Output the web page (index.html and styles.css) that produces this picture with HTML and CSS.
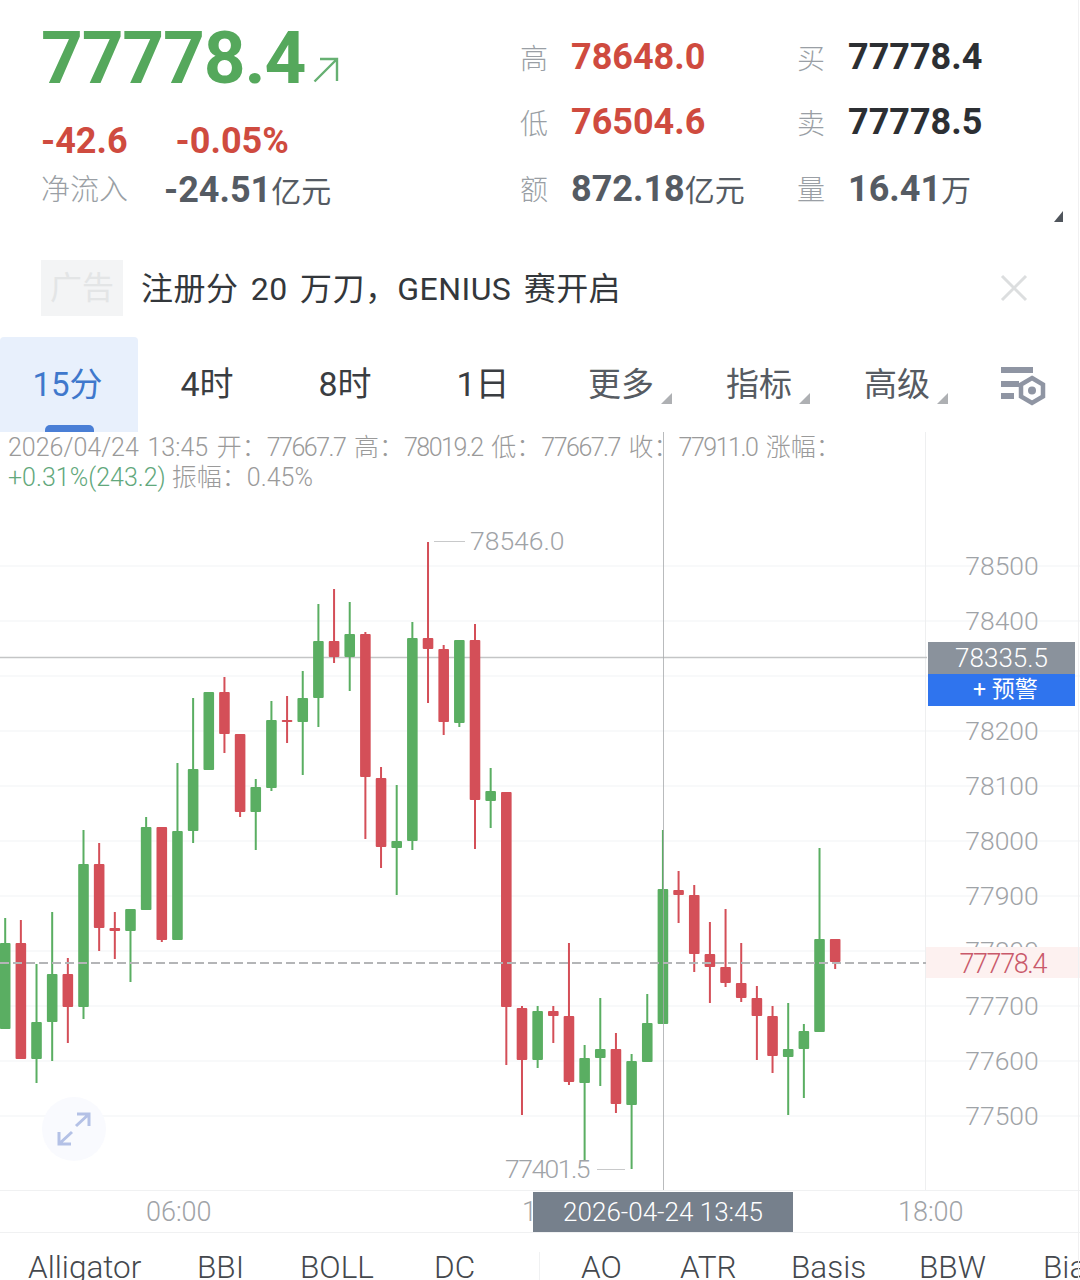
FILE: index.html
```html
<!DOCTYPE html>
<html>
  <head>
    <title>BTC 行情</title>
    <link rel="stylesheet" href="styles.css">
  </head>
  <body>
    <header class="quote">
      <div class="quote-left">
        <div class="last">
          77778.4
          <svg class="last-arrow" width="26" height="26" viewBox="0 0 26 26">
            <path d="M1.5 24.5 L24 2 M7 2 H24 V24" fill="none" stroke="#66b072" stroke-width="2.4" />
          </svg>
        </div>
        <div class="change"><span>-42.6</span><span>-0.05%</span></div>
        <div class="flow">
          <span class="lbl">净流入</span>
          <b>-24.51<small>亿元</small></b>
        </div>
      </div>
      <div class="stats">
        <span class="lbl">高</span><b class="red">78648.0</b>
        <span class="lbl">买</span><b class="dark">77778.4</b>
        <span class="lbl">低</span><b class="red">76504.6</b>
        <span class="lbl">卖</span><b class="dark">77778.5</b>
        <span class="lbl">额</span><b>872.18<small>亿元</small></b>
        <span class="lbl">量</span><b>16.41<small>万</small></b>
      </div>
      <i class="corner corner-dark"></i>
    </header>

    <div class="ad">
      <span class="ad-tag">广告</span>
      <span class="ad-text">注册分 20 万刀，GENIUS 赛开启</span>
      <svg class="ad-close" width="28" height="28" viewBox="0 0 28 28">
        <path d="M2 2 L26 26 M26 2 L2 26" stroke="#dcdedf" stroke-width="3" />
      </svg>
    </div>

    <nav class="tabs">
      <div class="tab active">15分</div>
      <div class="tab">4时</div>
      <div class="tab">8时</div>
      <div class="tab">1日</div>
      <div class="tab muted">更多<i class="corner"></i></div>
      <div class="tab muted">指标<i class="corner"></i></div>
      <div class="tab muted">高级<i class="corner"></i></div>
      <div class="tab tab-icon">
        <svg width="46" height="40" viewBox="0 0 46 40">
          <path d="M1 3 H33 M1 17 H19 M1 29 H14" stroke="#8f95a3" stroke-width="6" fill="none" />
          <path d="M32 11 L43 17.5 V29.5 L32 36 L21 29.5 V17.5 Z" stroke="#8f95a3" stroke-width="4.5" fill="#fff" />
          <circle cx="32" cy="23.5" r="4" fill="#8f95a3" />
        </svg>
      </div>
    </nav>

    <section class="chart">
      <svg id="kline" class="kline" width="1080" height="758" viewBox="0 432 1080 758"></svg>

      <div class="ohlc">
        <div class="ohlc-top">2026/04/24 13:45 开：<span class="n">77667.7</span> 高：<span class="n">78019.2</span> 低：<span class="n">77667.7</span> 收：<span class="n">77911.0</span> 涨幅：</div>
        <div><span class="up">+0.31%(243.2)</span> 振幅：0.45%</div>
      </div>

      <div class="price-tag">
        <div class="price-tag-val">78335.5</div>
        <div class="price-tag-btn">+ 预警</div>
      </div>
      <div class="last-tag">77778.4</div>

      <div class="expand">
        <svg width="36" height="36" viewBox="0 0 36 36">
          <path d="M20 15 L33 3 M21 3 H33 V15 M16 21 L3 33 M3 21 V33 H15" fill="none" stroke="#b4c1e6" stroke-width="3" />
        </svg>
      </div>
    </section>

    <div class="time-axis">
      <span class="time t-6">06:00</span>
      <span class="time t-12">1</span>
      <span class="time-tag">2026-04-24 13:45</span>
      <span class="time t-18">18:00</span>
    </div>

    <div class="indicators">
      <span class="w-all">Alligator</span>
      <span class="w-bbi">BBI</span>
      <span class="w-boll">BOLL</span>
      <span class="w-dc">DC</span>
      <span class="sep"></span>
      <span class="w-ao">AO</span>
      <span class="w-atr">ATR</span>
      <span class="w-basis">Basis</span>
      <span class="w-bbw">BBW</span>
      <span>Bias</span>
    </div>

    <script src="script.js"></script>
  </body>
</html>
```

FILE: styles.css
```css
html,
body {
  margin: 0;
  height: 1280px;
  overflow: hidden;
  background: #fff;
}

body {
  width: 1080px;
  font-family: "Roboto", "Noto Sans CJK SC", sans-serif;
  color: #33373b;
}

/* faint line down the right edge of the capture */
body::after {
  content: "";
  position: absolute;
  right: 1px;
  top: 0;
  width: 1px;
  height: 1280px;
  background: #f0f0f1;
}

b {
  font-weight: 700;
}

small {
  font-size: 30px;
  font-weight: 400;
}

.lbl {
  color: #9a9fa5;
  font-weight: 300;
}

.red {
  color: #cf4b3f;
}

.dark {
  color: #2c2f33;
}

/* top quote block */
.quote {
  position: relative;
  height: 260px;
  display: flex;
  box-sizing: border-box;
  padding: 14px 0 0 41px;
}

.quote-left {
  width: 479px;
}

.last {
  display: flex;
  align-items: flex-end;
  height: 88px;
  line-height: 88px;
  font-size: 73px;
  font-weight: 700;
  letter-spacing: -1.2px;
  color: #55a85c;
}

.last-arrow {
  margin: 0 0 19px 8px;
}

.change {
  display: flex;
  gap: 48px;
  margin-top: 19px;
  line-height: 40px;
  font-size: 36px;
  font-weight: 700;
  color: #cf4b3f;
}

.flow {
  display: flex;
  gap: 36px;
  margin-top: 9px;
  line-height: 40px;
  font-size: 29px;
  color: #555b63;
}

.flow b {
  font-size: 36px;
}

.stats {
  display: grid;
  grid-template-columns: 51px 226px 51px auto;
  grid-template-rows: 65px 65px 68px;
  align-items: center;
  margin-top: 10px;
  font-size: 36px;
  color: #555b63;
}

.stats .lbl {
  font-size: 28px;
}

.corner {
  position: absolute;
  width: 11px;
  height: 11px;
  background: #aeb0b3;
  clip-path: polygon(100% 0, 100% 100%, 0 100%);
}

.corner-dark {
  right: 17px;
  top: 211px;
  width: 9px;
  background: #50555c;
}

/* ad strip */
.ad {
  display: flex;
  align-items: center;
  height: 56px;
  padding-left: 41px;
}

.ad-tag {
  width: 82px;
  height: 56px;
  line-height: 56px;
  text-align: center;
  font-size: 32px;
  background: #f3f4f5;
  color: #e3e5e6;
}

.ad-text {
  margin-left: 18px;
  padding-bottom: 5px;
  font-size: 32px;
  letter-spacing: 0.45px;
  word-spacing: 4px;
}

.ad-close {
  margin-left: auto;
  margin-right: 52px;
}

/* period tabs */
.tabs {
  display: flex;
  height: 95px;
  margin-top: 21px;
  width: 1080px;
}

.tab {
  position: relative;
  width: 138px;
  line-height: 95px;
  text-align: center;
  font-size: 34px;
  color: #3a3d41;
}

.tab.muted {
  font-size: 33px;
  color: #565b62;
}

.tab.muted .corner {
  right: 18px;
  top: 56px;
}

.tab.active {
  box-sizing: border-box;
  padding-right: 3px;
  font-size: 33px;
  background: #e8f0fc;
  color: #3f78cc;
  border-radius: 4px 4px 0 0;
}

.tab.active::after {
  content: "";
  position: absolute;
  left: 45px;
  bottom: 0;
  width: 49px;
  height: 7px;
  border-radius: 5px 5px 0 0;
  background: #4a7fd6;
}

.tab-icon {
  flex: 1;
  line-height: 0;
  text-align: left;
  padding: 30px 0 0 34px;
}

/* chart canvas */
.chart {
  position: relative;
  height: 758px;
}

.kline {
  display: block;
}

.axis-label {
  font-size: 26.5px;
  font-weight: 300;
  fill: #9fa3a7;
}

.axis-label.tight {
  letter-spacing: -1.5px;
}

.ohlc {
  position: absolute;
  left: 8px;
  top: 1px;
  line-height: 30px;
  font-size: 25px;
  font-weight: 300;
  color: #9a9a9a;
  white-space: nowrap;
}

.ohlc-top {
  word-spacing: 2.5px;
}

.ohlc .n {
  letter-spacing: -1.5px;
}

.ohlc .up {
  color: #62a87c;
}

.price-tag {
  position: absolute;
  left: 928px;
  top: 210px;
  width: 147px;
  text-align: center;
}

.price-tag-val {
  height: 32px;
  line-height: 32px;
  font-size: 26px;
  font-weight: 300;
  background: #8a929c;
  color: #fff;
}

.price-tag-btn {
  box-sizing: border-box;
  height: 32px;
  padding-left: 8px;
  line-height: 32px;
  font-size: 23px;
  background: #2f74ee;
  color: #fff;
}

.last-tag {
  position: absolute;
  left: 926px;
  top: 515px;
  width: 154px;
  height: 31px;
  line-height: 35px;
  padding-right: 34px;
  box-sizing: border-box;
  text-align: right;
  font-size: 27px;
  font-weight: 300;
  letter-spacing: -1.4px;
  background: #fdf1f0;
  color: #c9596a;
}

.expand {
  position: absolute;
  left: 42px;
  top: 665px;
  width: 64px;
  height: 64px;
  display: flex;
  align-items: center;
  justify-content: center;
  border-radius: 50%;
  background: #f9fafe;
}

/* time axis */
.time-axis {
  position: relative;
  height: 41px;
  border-top: 1px solid #f0f1f2;
  border-bottom: 1px solid #f0f1f2;
  font-size: 27px;
  font-weight: 300;
  color: #9fa3a7;
}

.time {
  position: absolute;
  top: 1px;
  line-height: 41px;
}

.t-6 {
  left: 146px;
}

.t-12 {
  left: 522px;
}

.t-18 {
  left: 898px;
}

.time-tag {
  position: absolute;
  left: 533px;
  top: 1px;
  width: 260px;
  height: 40px;
  line-height: 40px;
  text-align: center;
  font-size: 26px;
  background: #76808c;
  color: #fff;
}

/* indicator strip, runs off the bottom and right */
.indicators {
  display: flex;
  align-items: center;
  height: 68px;
  width: 1052px;
  padding-left: 28px;
  overflow: hidden;
  font-size: 31.5px;
  font-weight: 300;
  color: #44484d;
  white-space: nowrap;
}

.indicators span {
  flex: none;
}

.sep {
  width: 1px;
  height: 30px;
  margin: 0 41px 0 0;
  background: #f0f1f2;
}

.w-all { width: 169px; }
.w-bbi { width: 103px; }
.w-boll { width: 134px; }
.w-dc { width: 105px; }
.w-ao { width: 99px; }
.w-atr { width: 111px; }
.w-basis { width: 128px; }
.w-bbw { width: 124px; }
```

FILE: script.js
```js
// [high, bodyTop, bodyBottom, low, up?]  y values are page pixels
const candles = [
  [918, 943, 1029, 1029, 1],
  [920, 943, 1059, 1059, 0],
  [964, 1022, 1059, 1083, 1],
  [912, 974, 1022, 1061, 1],
  [958, 974, 1007, 1043, 0],
  [830, 864, 1007, 1019, 1],
  [843, 864, 928, 951, 0],
  [912, 928, 931, 959, 0],
  [909, 909, 931, 982, 1],
  [817, 827, 910, 910, 1],
  [827, 827, 940, 942, 0],
  [763, 831, 940, 940, 1],
  [698, 769, 831, 843, 1],
  [692, 692, 770, 770, 1],
  [677, 692, 734, 753, 0],
  [734, 734, 812, 817, 0],
  [779, 787, 812, 850, 1],
  [701, 720, 788, 791, 1],
  [696, 720, 722, 743, 0],
  [671, 698, 722, 775, 1],
  [604, 641, 698, 727, 1],
  [589, 641, 657, 663, 0],
  [602, 634, 657, 691, 1],
  [632, 634, 777, 839, 0],
  [767, 778, 847, 868, 0],
  [785, 841, 848, 895, 1],
  [622, 638, 841, 850, 1],
  [542, 638, 649, 703, 0],
  [645, 649, 722, 735, 0],
  [640, 640, 723, 727, 1],
  [624, 640, 800, 849, 0],
  [768, 791, 801, 828, 1],
  [792, 792, 1007, 1065, 0],
  [1006, 1008, 1060, 1115, 0],
  [1006, 1011, 1060, 1068, 1],
  [1006, 1011, 1016, 1043, 0],
  [943, 1016, 1082, 1085, 0],
  [1045, 1058, 1083, 1160, 1],
  [998, 1049, 1058, 1086, 1],
  [1033, 1049, 1104, 1113, 0],
  [1054, 1061, 1105, 1169, 1],
  [994, 1023, 1062, 1062, 1],
  [830, 889, 1024, 1024, 1],
  [871, 890, 895, 923, 0],
  [885, 895, 954, 972, 0],
  [922, 954, 967, 1003, 0],
  [909, 967, 983, 987, 0],
  [943, 983, 998, 1002, 0],
  [986, 998, 1016, 1060, 0],
  [1006, 1016, 1056, 1073, 0],
  [1003, 1049, 1057, 1115, 1],
  [1024, 1031, 1049, 1098, 1],
  [848, 939, 1032, 1032, 1],
  [939, 939, 962, 969, 0],
];

const GREEN = "#5aae62";
const RED = "#d44f58";

const prices = [
  [566, "78500"],
  [621, "78400"],
  [731, "78200"],
  [786, "78100"],
  [841, "78000"],
  [896, "77900"],
  [951, "77800"],
  [1006, "77700"],
  [1061, "77600"],
  [1116, "77500"],
];

let parts = [];

// grid
[566, 621, 676, 731, 786, 841, 896, 951, 1006, 1061, 1116].forEach((y) => {
  parts.push(`<line x1="0" x2="1080" y1="${y}" y2="${y}" stroke="#f6f7f8" stroke-width="1.5" />`);
});
parts.push('<line x1="925.5" x2="925.5" y1="432" y2="1190" stroke="#eeeff0" />');
parts.push('<line x1="0" x2="927" y1="657.5" y2="657.5" stroke="#c4c5c6" stroke-width="1.5" />');

// candles
candles.forEach((c, i) => {
  const x = 5.2 + 15.66 * i;
  const col = c[4] ? GREEN : RED;
  parts.push(`<rect x="${x - 1}" y="${c[0]}" width="2" height="${c[3] - c[0]}" fill="${col}" />`);
  parts.push(`<rect x="${x - 5.3}" y="${c[1]}" width="10.6" height="${c[2] - c[1]}" rx="1" fill="${col}" />`);
});

// crosshair and last price line
parts.push('<line x1="663.5" x2="663.5" y1="432" y2="1190" stroke="#a8aaac" stroke-opacity="0.8" />');
parts.push('<line x1="0" x2="926" y1="963" y2="963" stroke="#b4b5b7" stroke-width="2" stroke-dasharray="9 4" />');

// price axis
prices.forEach(([y, txt]) => {
  parts.push(`<text class="axis-label" x="1002" y="${y + 9}" text-anchor="middle">${txt}</text>`);
});

// high / low markers
parts.push('<line x1="434" x2="465" y1="541.5" y2="541.5" stroke="#c8c9ca" />');
parts.push('<text class="axis-label" x="470" y="550">78546.0</text>');
parts.push('<text class="axis-label tight" x="505" y="1178">77401.5</text>');
parts.push('<line x1="597" x2="625" y1="1169.5" y2="1169.5" stroke="#c8c9ca" />');

document.getElementById("kline").innerHTML = parts.join("");
```
